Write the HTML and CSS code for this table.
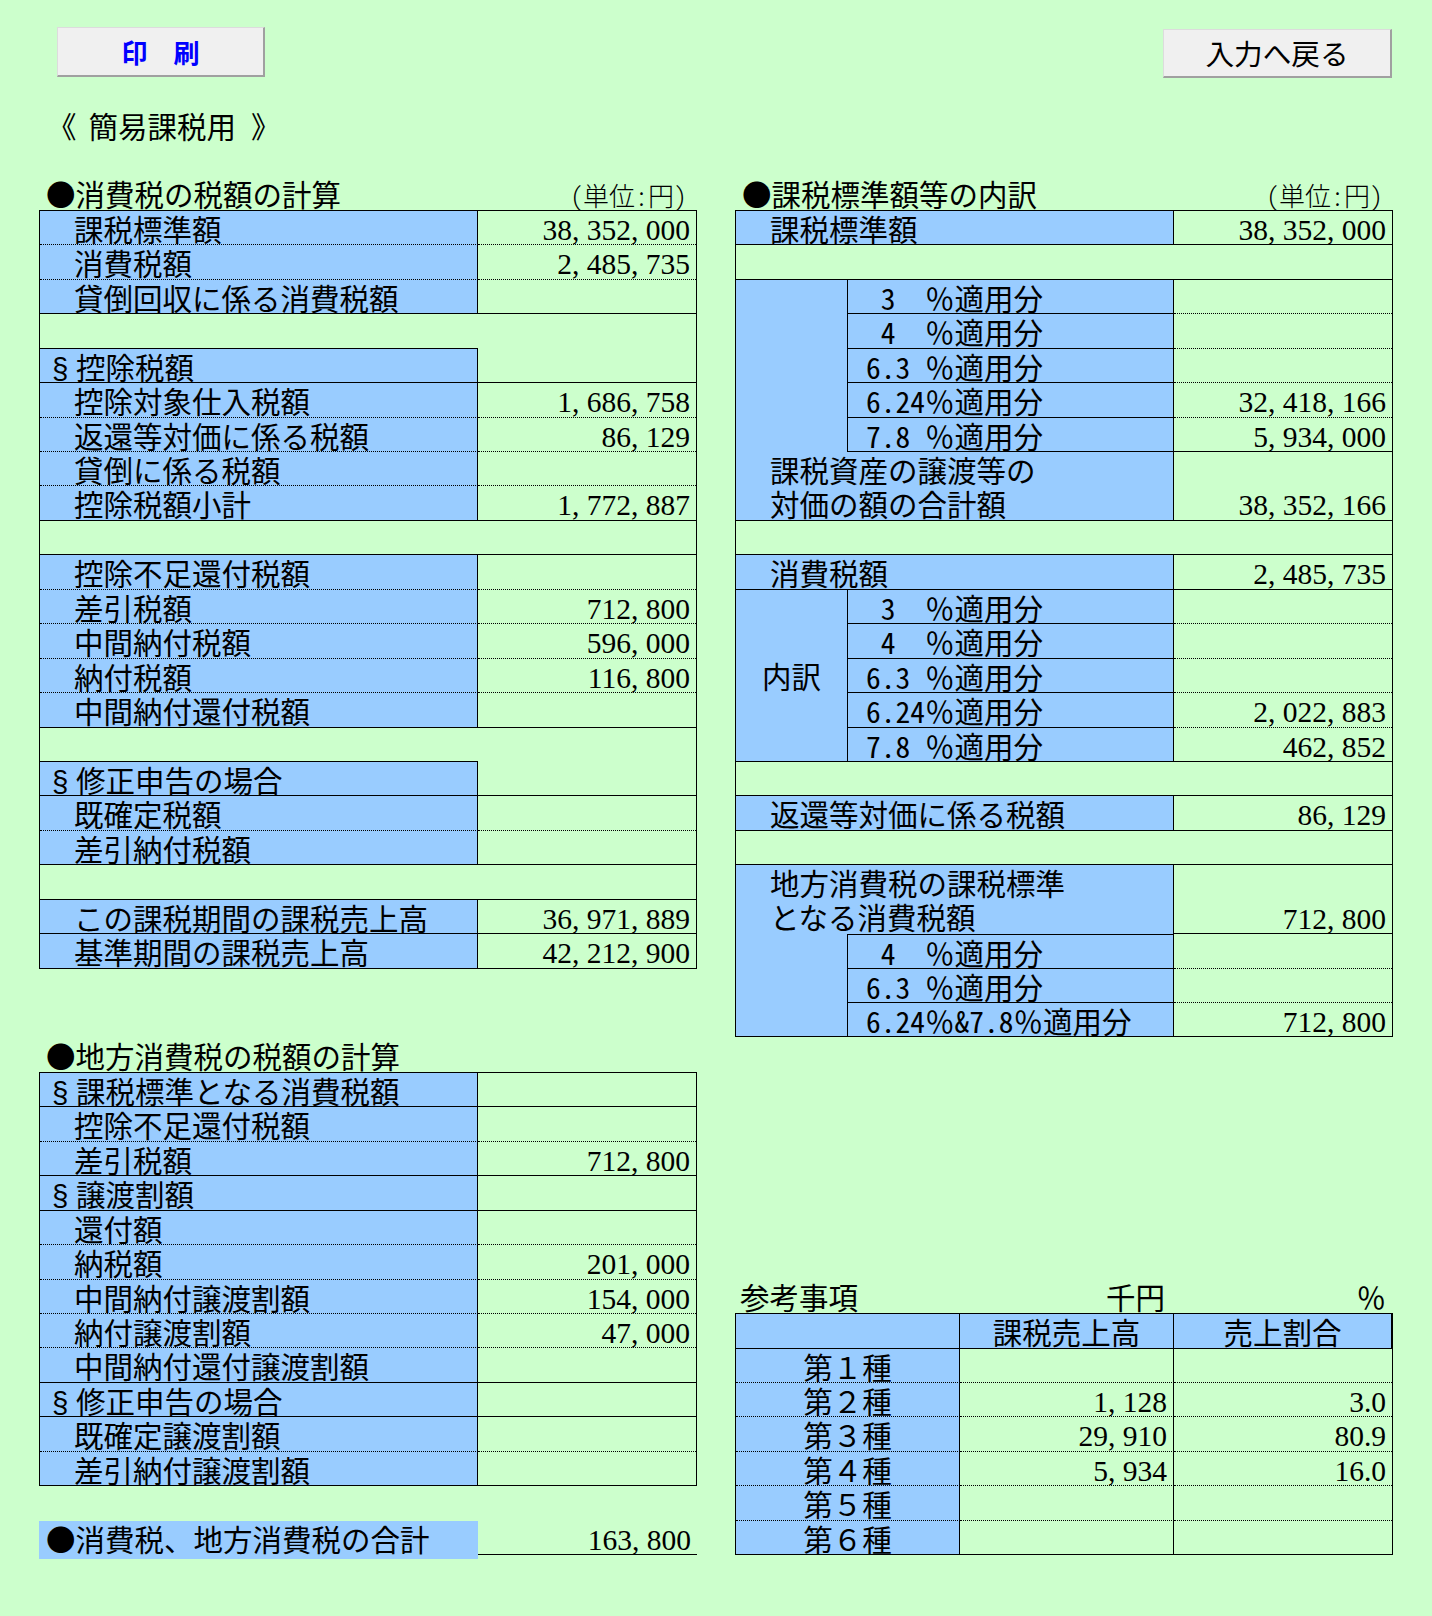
FILE: index.html
```html
<!DOCTYPE html>
<html lang="ja">
<head>
<meta charset="utf-8">
<title>簡易課税用</title>
<link rel="stylesheet" href="styles.css">
</head>
<body>
<div class="top">
  <div class="btnrow">
    <button type="button" class="btn print">印　刷</button>
    <button type="button" class="btn back">入力へ戻る</button>
  </div>
  <div class="title"><span class="q1">《</span>簡易課税用<span class="q2">》</span></div>
</div>

<div class="main">
  <div class="col">
    <div class="hdr"><span>●消費税の税額の計算</span><span class="unit">(単位:円)</span></div>
    <div class="tbl t1">
      <div class="l d">課税標準額</div><div class="v d">38<i>,</i>352<i>,</i>000</div>
      <div class="l d">消費税額</div><div class="v d">2<i>,</i>485<i>,</i>735</div>
      <div class="l">貸倒回収に係る消費税額</div><div class="v"></div>
      <div class="e"></div><div class="v r2"></div>
      <div class="l s"><span class="sec">§</span>控除税額</div>
      <div class="l d">控除対象仕入税額</div><div class="v d">1<i>,</i>686<i>,</i>758</div>
      <div class="l d">返還等対価に係る税額</div><div class="v d">86<i>,</i>129</div>
      <div class="l d">貸倒に係る税額</div><div class="v d"></div>
      <div class="l">控除税額小計</div><div class="v">1<i>,</i>772<i>,</i>887</div>
      <div class="e full"></div>
      <div class="l d">控除不足還付税額</div><div class="v d"></div>
      <div class="l d">差引税額</div><div class="v d">712<i>,</i>800</div>
      <div class="l d">中間納付税額</div><div class="v d">596<i>,</i>000</div>
      <div class="l d">納付税額</div><div class="v d">116<i>,</i>800</div>
      <div class="l">中間納付還付税額</div><div class="v"></div>
      <div class="e"></div><div class="v r2"></div>
      <div class="l s"><span class="sec">§</span>修正申告の場合</div>
      <div class="l d">既確定税額</div><div class="v d"></div>
      <div class="l">差引納付税額</div><div class="v"></div>
      <div class="e full"></div>
      <div class="l">この課税期間の課税売上高</div><div class="v">36<i>,</i>971<i>,</i>889</div>
      <div class="l">基準期間の課税売上高</div><div class="v">42<i>,</i>212<i>,</i>900</div>
    </div>

    <div class="hdr hdr2"><span>●地方消費税の税額の計算</span></div>
    <div class="tbl t1">
      <div class="l s"><span class="sec">§</span>課税標準となる消費税額</div><div class="v"></div>
      <div class="l d">控除不足還付税額</div><div class="v d"></div>
      <div class="l">差引税額</div><div class="v">712<i>,</i>800</div>
      <div class="l s"><span class="sec">§</span>譲渡割額</div><div class="v"></div>
      <div class="l d">還付額</div><div class="v d"></div>
      <div class="l d">納税額</div><div class="v d">201<i>,</i>000</div>
      <div class="l d">中間納付譲渡割額</div><div class="v d">154<i>,</i>000</div>
      <div class="l d">納付譲渡割額</div><div class="v d">47<i>,</i>000</div>
      <div class="l">中間納付還付譲渡割額</div><div class="v"></div>
      <div class="l s"><span class="sec">§</span>修正申告の場合</div><div class="v"></div>
      <div class="l d">既確定譲渡割額</div><div class="v d"></div>
      <div class="l">差引納付譲渡割額</div><div class="v"></div>
    </div>

    <div class="total">
      <div class="tl">●消費税、地方消費税の合計</div>
      <div class="tv">163<i>,</i>800</div>
    </div>
  </div>

  <div class="col">
    <div class="hdr"><span>●課税標準額等の内訳</span><span class="unit">(単位:円)</span></div>
    <div class="tbl t2">
      <div class="l c12">課税標準額</div><div class="v">38<i>,</i>352<i>,</i>000</div>
      <div class="e full"></div>
      <div class="m r5"></div>
      <div class="sl d"><span class="rt p">３</span>％適用分</div><div class="v d"></div>
      <div class="sl d"><span class="rt p">４</span>％適用分</div><div class="v d"></div>
      <div class="sl d"><span class="rt">6.3</span>％適用分</div><div class="v d"></div>
      <div class="sl d"><span class="rt">6.24</span>％適用分</div><div class="v d">32<i>,</i>418<i>,</i>166</div>
      <div class="sl"><span class="rt">7.8</span>％適用分</div><div class="v">5<i>,</i>934<i>,</i>000</div>
      <div class="l c12 r2">課税資産の譲渡等の<br>対価の額の合計額</div><div class="v r2 low">38<i>,</i>352<i>,</i>166</div>
      <div class="e full"></div>
      <div class="l c12">消費税額</div><div class="v">2<i>,</i>485<i>,</i>735</div>
      <div class="m r5 bb">内訳</div>
      <div class="sl d"><span class="rt p">３</span>％適用分</div><div class="v d"></div>
      <div class="sl d"><span class="rt p">４</span>％適用分</div><div class="v d"></div>
      <div class="sl d"><span class="rt">6.3</span>％適用分</div><div class="v d"></div>
      <div class="sl d"><span class="rt">6.24</span>％適用分</div><div class="v d">2<i>,</i>022<i>,</i>883</div>
      <div class="sl"><span class="rt">7.8</span>％適用分</div><div class="v">462<i>,</i>852</div>
      <div class="e full"></div>
      <div class="l c12">返還等対価に係る税額</div><div class="v">86<i>,</i>129</div>
      <div class="e full"></div>
      <div class="l c12 r2 nb">地方消費税の課税標準<br>となる消費税額</div><div class="v r2 low">712<i>,</i>800</div>
      <div class="m r3 bb"></div>
      <div class="sl d bt"><span class="rt p">４</span>％適用分</div><div class="v d"></div>
      <div class="sl d"><span class="rt">6.3</span>％適用分</div><div class="v d"></div>
      <div class="sl"><span class="hw">6.24</span>％<span class="hw">&amp;7.8</span>％適用分</div><div class="v">712<i>,</i>800</div>
    </div>

    <div class="refh">
      <div class="rh1">参考事項</div>
      <div class="rh2">千円</div>
      <div class="rh3">％</div>
    </div>
    <div class="tbl t3">
      <div class="l ctr"></div><div class="l ctr">課税売上高</div><div class="l ctr">売上割合</div>
      <div class="l ctr d">第１種</div><div class="v d br"></div><div class="v d"></div>
      <div class="l ctr d">第２種</div><div class="v d br">1<i>,</i>128</div><div class="v d">3.0</div>
      <div class="l ctr d">第３種</div><div class="v d br">29<i>,</i>910</div><div class="v d">80.9</div>
      <div class="l ctr d">第４種</div><div class="v d br">5<i>,</i>934</div><div class="v d">16.0</div>
      <div class="l ctr d">第５種</div><div class="v d br"></div><div class="v d"></div>
      <div class="l ctr">第６種</div><div class="v br"></div><div class="v"></div>
    </div>
  </div>
</div>
</body>
</html>
```

FILE: styles.css
```css
:root {
  --rh: 34.45px;
  --green: #ccffcc;
  --blue: #99ccff;
}

* {
  box-sizing: border-box;
}

html,
body {
  margin: 0;
  padding: 0;
  background: var(--green);
}

body {
  width: 1432px;
  min-height: 1616px;
  font-family: "Noto Sans CJK JP", "Noto Sans", sans-serif;
  font-size: 29.5px;
  line-height: 34px;
  color: #000;
}

/* ---------- top area ---------- */
.top {
  height: 175.55px;
  padding-left: 57px;
  padding-right: 40px;
}

.btnrow {
  display: flex;
  justify-content: space-between;
  align-items: flex-start;
  padding-top: 27px;
  height: 80px;
}

.btn {
  display: flex;
  align-items: center;
  justify-content: center;
  padding: 0;
  margin: 0;
  background: #f0f0f0;
  border: none;
  border-top: 1px solid #dcdcdc;
  border-left: 1px solid #dcdcdc;
  border-right: 2px solid #a0a0a0;
  border-bottom: 2px solid #a0a0a0;
  font-family: "Noto Sans CJK JP", sans-serif;
  line-height: 1;
  color: #000;
}

.print {
  width: 208px;
  height: 50px;
  color: #0000ff;
  font-size: 26px;
  font-weight: bold;
}

.back {
  width: 229px;
  height: 49px;
  margin-top: 2px;
  font-size: 28.6px;
}

.title {
  margin-top: 27.6px;
  margin-left: -10px;
  height: var(--rh);
  white-space: nowrap;
}

.q1 {
  margin-right: 12px;
}

.q2 {
  margin-left: 15px;
}

/* ---------- main columns ---------- */
.main {
  display: flex;
  align-items: flex-start;
  gap: 38px;
  padding-left: 39px;
}

.col {
  width: 658px;
}

.hdr {
  display: flex;
  justify-content: space-between;
  align-items: baseline;
  height: var(--rh);
  padding: 0 10px 0 7px;
  white-space: nowrap;
}

.hdr2 {
  margin-top: 68.9px;
}

.unit {
  font-size: 26px;
  font-weight: 300;
  font-feature-settings: "hwid" 1;
}

/* ---------- tables ---------- */
.tbl {
  display: grid;
  grid-auto-rows: var(--rh);
  border: 1px solid #000;
  border-bottom: none;
}

.t1 {
  grid-template-columns: 438px 218px;
}

.t2 {
  grid-template-columns: 112px 326px 218px;
}

.t3 {
  grid-template-columns: 224px 214px 218px;
}

.l {
  background: var(--blue);
  border-right: 1px solid #000;
  border-bottom: 1px solid #000;
  padding-left: 34px;
  white-space: nowrap;
}

.v {
  border-bottom: 1px solid #000;
  text-align: right;
  padding-right: 6px;
  font-family: "Liberation Serif", serif;
  line-height: 38px;
  white-space: nowrap;
}

.v i,
.tv i {
  font-style: normal;
  letter-spacing: 0.25em;
}

.d {
  border-bottom-style: dotted;
}

.e {
  border-bottom: 1px solid #000;
}

.full {
  grid-column: 1 / -1;
}

.c12 {
  grid-column: 1 / 3;
}

.r2 {
  grid-row: span 2;
}

.r3 {
  grid-row: span 3;
}

.r5 {
  grid-row: span 5;
}

.low {
  padding-top: var(--rh);
}

.nb {
  border-bottom: none;
}

.bt {
  border-top: 1px solid #000;
}

.br {
  border-right: 1px solid #000;
}

.m {
  background: var(--blue);
  border-right: 1px solid #000;
}

.m.bb {
  border-bottom: 1px solid #000;
  display: flex;
  align-items: center;
  justify-content: center;
}

.s {
  padding-left: 12px;
}

.sec {
  display: inline-block;
  width: 24px;
  font-family: "Liberation Sans", sans-serif;
}

.sl {
  background: var(--blue);
  border-right: 1px solid #000;
  border-bottom: 1px solid #000;
  padding-left: 18px;
  white-space: nowrap;
}

.rt {
  display: inline-block;
  width: 2em;
  font-feature-settings: "hwid" 1;
}

.hw {
  font-feature-settings: "hwid" 1;
}

.p {
  padding-left: 0.5em;
}

.ctr {
  text-align: center;
  padding-left: 0;
}

/* ---------- reference table header ---------- */
.refh {
  display: grid;
  grid-template-columns: 225px 214px 219px;
  height: var(--rh);
  margin-top: 241.15px;
}

.rh1 {
  padding-left: 5px;
}

.rh2 {
  text-align: right;
  padding-right: 9px;
}

.rh3 {
  text-align: right;
  padding-right: 7px;
}

/* ---------- total row ---------- */
.total {
  display: grid;
  grid-template-columns: 439px 219px;
  height: var(--rh);
  margin-top: var(--rh);
  border-bottom: 1px solid #000;
}

.tl {
  background: var(--blue);
  padding-left: 7px;
  white-space: nowrap;
}

.tv {
  text-align: right;
  padding-right: 6px;
  font-family: "Liberation Serif", serif;
  line-height: 38px;
}
```
